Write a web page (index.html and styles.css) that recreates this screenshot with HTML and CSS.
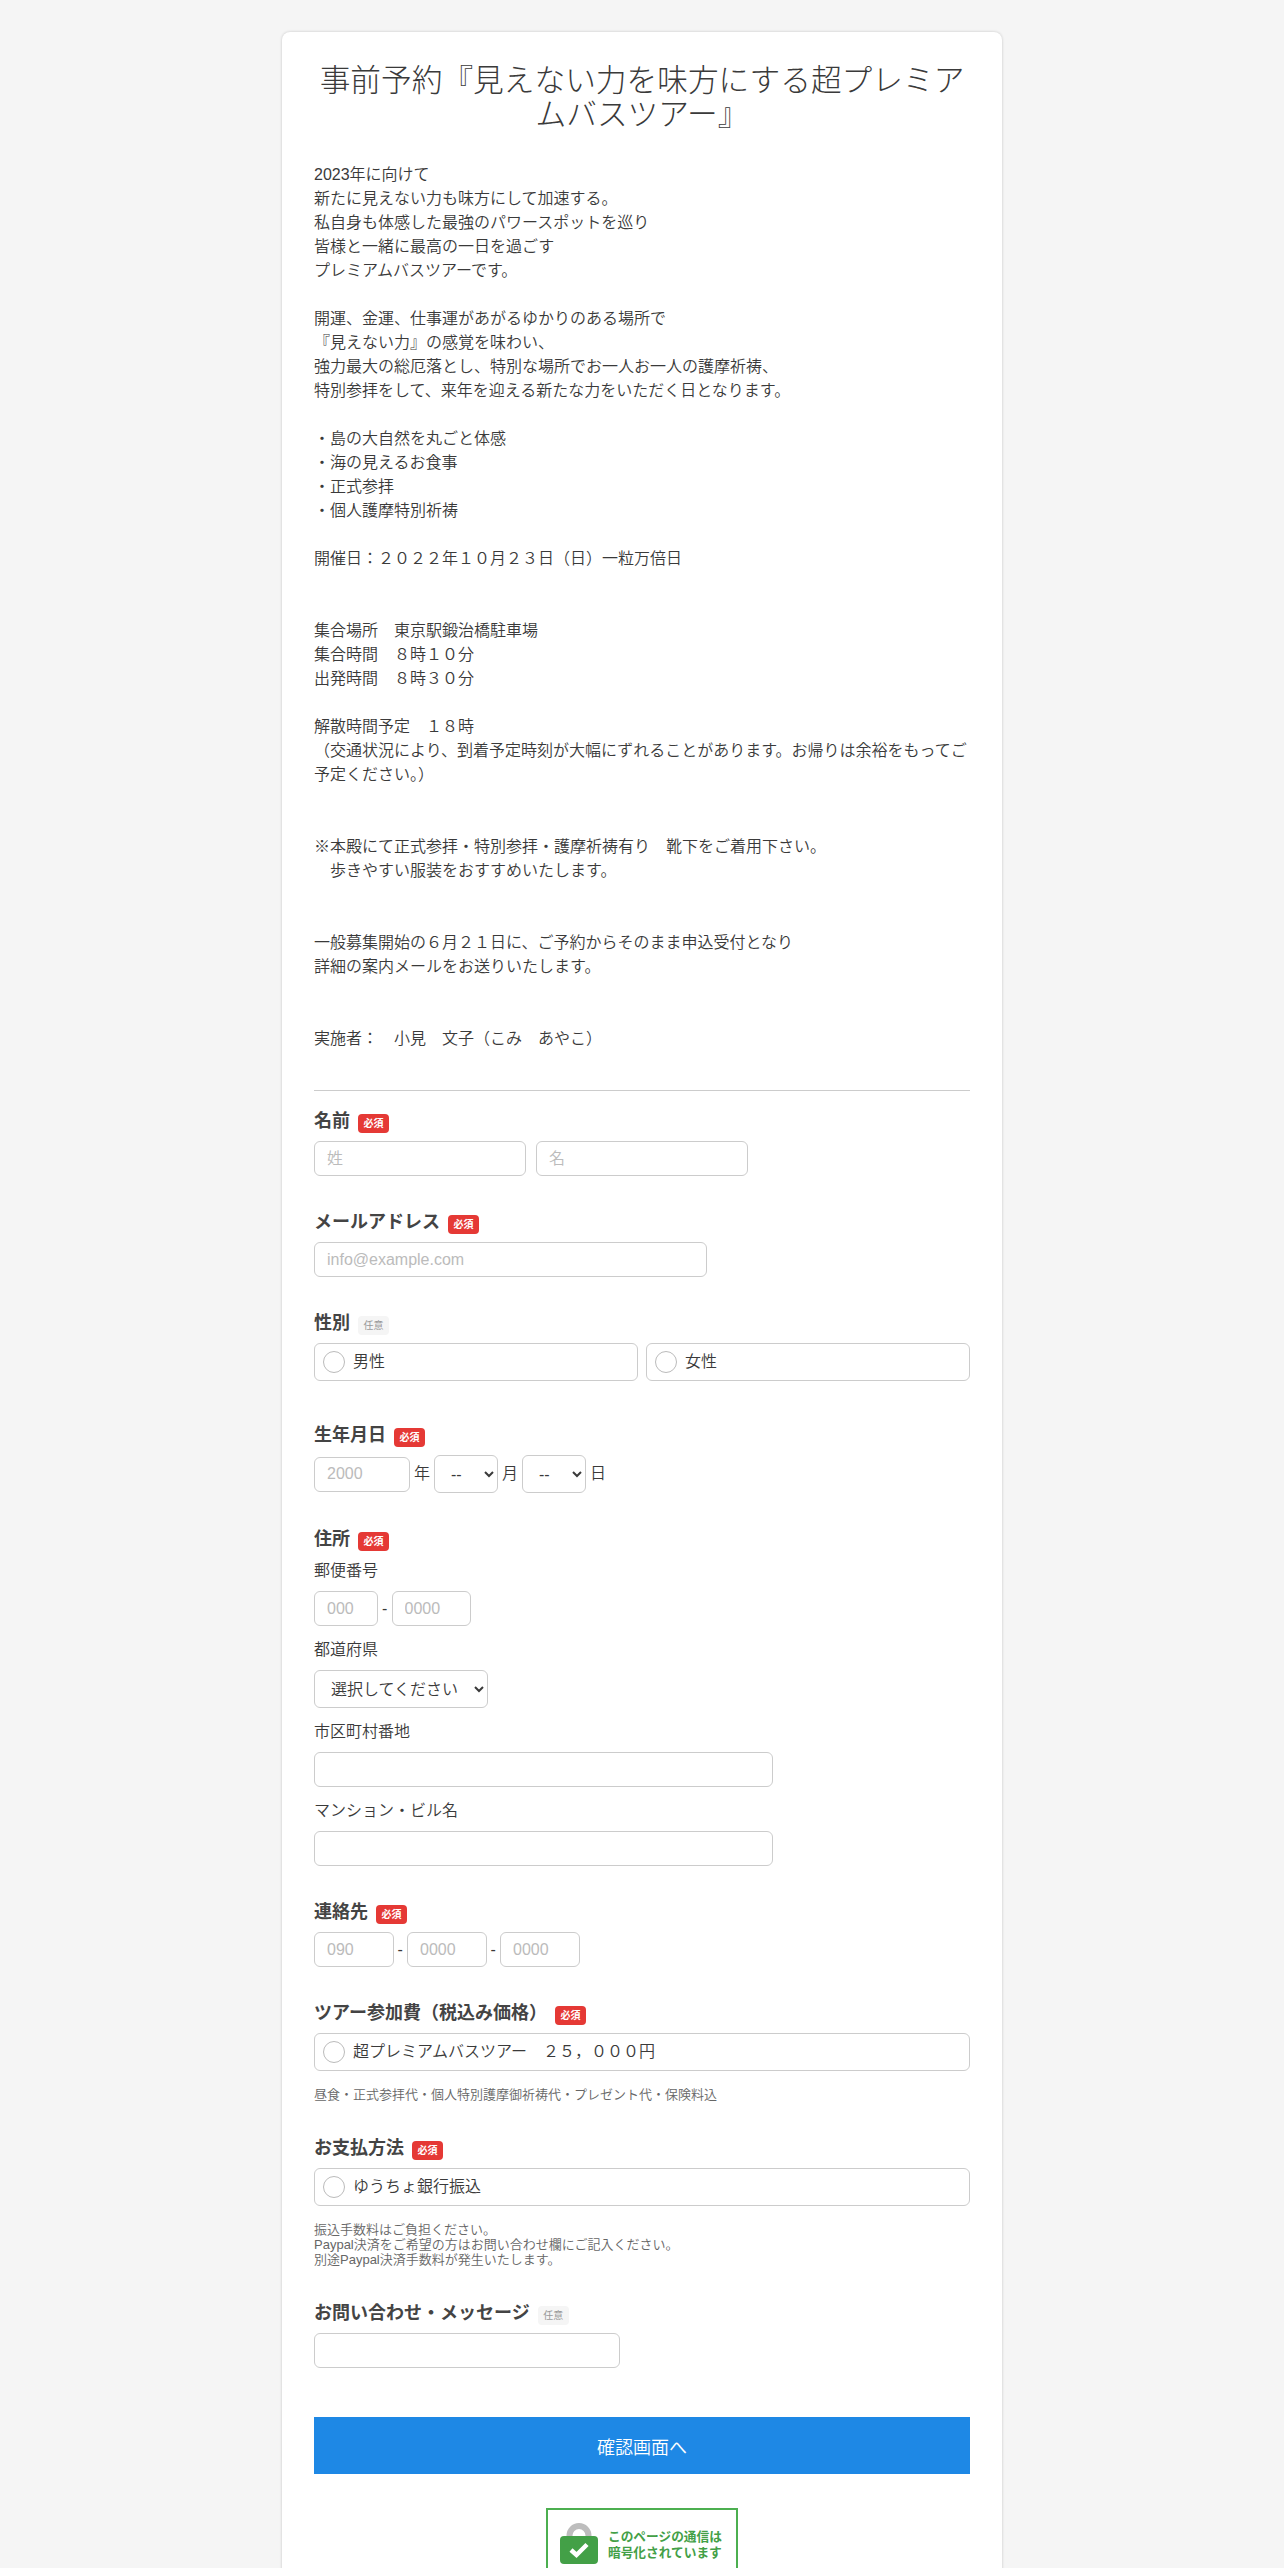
FILE: index.html
```html
<!DOCTYPE html>
<html lang="ja">
<head>
<meta charset="utf-8">
<title>事前予約</title>
<link rel="stylesheet" href="styles.css">
</head>
<body>
<div class="page">
<main class="card">
<h1 class="title">事前予約『見えない力を味方にする超プレミアムバスツアー』</h1>
<p class="intro">2023年に向けて<br>新たに見えない力も味方にして加速する。<br>私自身も体感した最強のパワースポットを巡り<br>皆様と一緒に最高の一日を過ごす<br>プレミアムバスツアーです。<br><br>開運、金運、仕事運があがるゆかりのある場所で<br>『見えない力』の感覚を味わい、<br>強力最大の総厄落とし、特別な場所でお一人お一人の護摩祈祷、<br>特別参拝をして、来年を迎える新たな力をいただく日となります。<br><br>・島の大自然を丸ごと体感<br>・海の見えるお食事<br>・正式参拝<br>・個人護摩特別祈祷<br><br>開催日：２０２２年１０月２３日（日）一粒万倍日<br><br><br>集合場所　東京駅鍛治橋駐車場<br>集合時間　８時１０分<br>出発時間　８時３０分<br><br>解散時間予定　１８時<br>（交通状況により、到着予定時刻が大幅にずれることがあります。お帰りは余裕をもってご予定ください。）<br><br><br>※本殿にて正式参拝・特別参拝・護摩祈祷有り　靴下をご着用下さい。<br>　歩きやすい服装をおすすめいたします。<br><br><br>一般募集開始の６月２１日に、ご予約からそのまま申込受付となり<br>詳細の案内メールをお送りいたします。<br><br><br>実施者：　小見　文子（こみ　あやこ）</p>
<hr class="rule">
<form class="form">
<div class="field">
<div class="label">名前<span class="req">必須</span></div>
<div class="row gap10"><input class="input w212" placeholder="姓"><input class="input w212" placeholder="名"></div>
</div>
<div class="field">
<div class="label">メールアドレス<span class="req">必須</span></div>
<input class="input w393" placeholder="info@example.com">
</div>
<div class="field wide">
<div class="label">性別<span class="opt">任意</span></div>
<div class="row gap8">
<label class="choice half"><span class="radio"></span>男性</label>
<label class="choice half"><span class="radio"></span>女性</label>
</div>
</div>
<div class="field">
<div class="label">生年月日<span class="req">必須</span></div>
<div class="row center">
<input class="input w96" placeholder="2000"><span class="unit">年</span>
<select class="select w64"><option>--</option></select><span class="unit">月</span>
<select class="select w64"><option>--</option></select><span class="unit">日</span>
</div>
</div>
<div class="field">
<div class="label">住所<span class="req">必須</span></div>
<div class="sub">郵便番号</div>
<div class="row center mb12"><input class="input w64" placeholder="000"><span class="dash">-</span><input class="input w80" placeholder="0000"></div>
<div class="sub">都道府県</div>
<select class="select w174 mb12"><option>選択してください</option></select>
<div class="sub">市区町村番地</div>
<input class="input w460 mb12">
<div class="sub">マンション・ビル名</div>
<input class="input w460">
</div>
<div class="field">
<div class="label">連絡先<span class="req">必須</span></div>
<div class="row center"><input class="input w80" placeholder="090"><span class="dash">-</span><input class="input w80" placeholder="0000"><span class="dash">-</span><input class="input w80" placeholder="0000"></div>
</div>
<div class="field">
<div class="label">ツアー参加費（税込み価格）<span class="req">必須</span></div>
<label class="choice"><span class="radio"></span>超プレミアムバスツアー　２５，０００円</label>
<p class="note">昼食・正式参拝代・個人特別護摩御祈祷代・プレゼント代・保険料込</p>
</div>
<div class="field">
<div class="label">お支払方法<span class="req">必須</span></div>
<label class="choice"><span class="radio"></span>ゆうちょ銀行振込</label>
<p class="note">振込手数料はご負担ください。<br>Paypal決済をご希望の方はお問い合わせ欄にご記入ください。<br>別途Paypal決済手数料が発生いたします。</p>
</div>
<div class="field last">
<div class="label">お問い合わせ・メッセージ<span class="opt">任意</span></div>
<input class="input w306">
</div>
<button class="submit" type="button">確認画面へ</button>
<div class="secure">
<svg class="lock" width="38" height="41" viewBox="0 0 38 41" aria-hidden="true">
<path d="M9.5 15V12.5a9.5 9.5 0 0 1 19 0V15" fill="none" stroke="#bdbdbd" stroke-width="6"/>
<rect x="0" y="13" width="38" height="28" rx="4" fill="#43a047"/>
<path d="M11 27l5.500 5L27 21.500" fill="none" stroke="#fff" stroke-width="4.500"/>
</svg>
<div class="secure-text">このページの通信は<br>暗号化されています</div>
</div>
</form>
</main>
</div>
</body>
</html>
```
FILE: styles.css
```css
* { box-sizing: border-box; }
html, body { margin: 0; padding: 0; }
body {
  background: #f5f5f5;
  color: #3a3a3a;
  font-family: "Liberation Sans", "Noto Sans CJK JP", sans-serif;
  font-size: 16px;
  font-weight: 350;
  line-height: 24px;
}
.page { height: 2568px; overflow: hidden; padding-top: 32px; }
.card {
  width: 720px;
  margin: 0 auto;
  padding: 32px 32px 40px;
  background: #fff;
  border-radius: 8px;
  box-shadow: 0 0 3px rgba(0,0,0,.2);
}
.title {
  margin: 0 0 31px;
  font-size: 30.7px;
  font-weight: 300;
  line-height: 34px;
  text-align: center;
}
.intro { margin: 0; }
.rule { height: 1px; border: 0; background: #ccc; margin: 39px 0 17px; }
.field { margin-bottom: 33px; }
.field.wide { margin-bottom: 41px; }
.field.last { margin-bottom: 49px; }
.label {
  font-size: 18px;
  font-weight: 700;
  line-height: 27px;
  margin-bottom: 6px;
  color: #444;
}
.req, .opt {
  display: inline-block;
  width: 31px;
  height: 19px;
  margin-left: 8px;
  border-radius: 4px;
  font-size: 10px;
  font-weight: 700;
  line-height: 19px;
  text-align: center;
  vertical-align: 0;
}
.req { background: #e53935; color: #fff; }
.opt { background: #f5f5f5; color: #999; font-weight: 400; }
.row { display: flex; }
.center { align-items: center; }
.gap10 { gap: 10px; }
.gap8 { gap: 8px; }
.input, .select {
  display: block;
  height: 35px;
  background: #fff;
  border: 1px solid #ccc;
  border-radius: 6px;
  color: #3a3a3a;
  font: 350 16px "Liberation Sans", "Noto Sans CJK JP", sans-serif;
}
.input { padding: 0 12px; }
.input::placeholder { color: #bbb; opacity: 1; }
.select { height: 38px; padding: 0 12px; }
.w64 { width: 64px; }
.w80 { width: 79.5px; }
.w96 { width: 96px; }
.w174 { width: 174px; }
.w212 { width: 212px; }
.w306 { width: 306px; }
.w393 { width: 393px; }
.w460 { width: 459px; }
.mb12 { margin-bottom: 12px; }
.unit { width: 24px; text-align: center; }
.dash { width: 13.5px; text-align: center; }
.sub { line-height: 24px; margin-bottom: 8px; }
.choice {
  display: flex;
  align-items: center;
  height: 38px;
  padding-left: 8px;
  background: #fff;
  border: 1px solid #ccc;
  border-radius: 6px;
}
.half { flex: 1 1 0; }
.radio {
  width: 22px;
  height: 22px;
  margin-right: 8px;
  background: #fff;
  border: 1px solid #bbb;
  border-radius: 50%;
}
.note {
  margin: 16px 0 0;
  color: #666;
  font-size: 13px;
  line-height: 15px;
}
.submit {
  display: block;
  width: 100%;
  height: 57px;
  border: 0;
  background: #1e88e5;
  color: #fff;
  font: 350 18px "Liberation Sans", "Noto Sans CJK JP", sans-serif;
}
.secure {
  display: flex;
  align-items: flex-start;
  width: 192px;
  height: 70px;
  margin: 34px auto 0;
  padding: 13px 12px 6px;
  border: 2px solid #4caf50;
}
.lock { flex: none; margin-right: 10px; }
.secure-text {
  margin-top: 7px;
  color: #43a047;
  font-size: 12.7px;
  font-weight: 700;
  line-height: 15.500px;
  white-space: nowrap;
}
```
